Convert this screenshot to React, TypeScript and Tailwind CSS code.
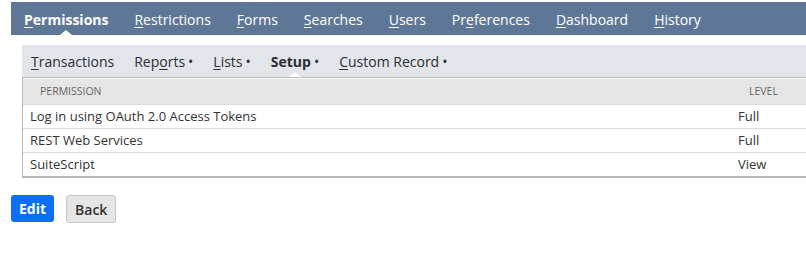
const tabs = [
  { pre: "", u: "P", post: "ermissions", active: true },
  { pre: "", u: "R", post: "estrictions" },
  { pre: "", u: "F", post: "orms" },
  { pre: "", u: "S", post: "earches" },
  { pre: "", u: "U", post: "sers" },
  { pre: "Pr", u: "e", post: "ferences" },
  { pre: "", u: "D", post: "ashboard" },
  { pre: "", u: "H", post: "istory" },
]

const subtabs = [
  { pre: "", u: "T", post: "ransactions", dot: false },
  { pre: "Rep", u: "o", post: "rts", dot: true },
  { pre: "", u: "L", post: "ists", dot: true },
  { pre: "Setup", u: "", post: "", dot: true, active: true },
  { pre: "", u: "C", post: "ustom Record", dot: true },
]

const rows = [
  { name: "Log in using OAuth 2.0 Access Tokens", level: "Full" },
  { name: "REST Web Services", level: "Full" },
  { name: "SuiteScript", level: "View" },
]

export default function App() {
  return (
    <div className="w-[806px] h-[257px] bg-white pt-[2px] text-[#222] font-['Open_Sans',sans-serif]">
      <div className="ml-[11px] h-[33px] bg-[#5f7797] flex items-center pl-[13px] gap-[26px]">
        {tabs.map((t) => (
          <div key={t.u + t.post} className={"relative h-full flex items-center pt-[1px] text-[14px] text-white " + (t.active ? "font-bold" : "")}>
            <span>
              {t.pre}
              <span className="underline underline-offset-2">{t.u}</span>
              {t.post}
            </span>
            {t.active && (
              <span className="absolute bottom-0 left-1/2 -translate-x-1/2 w-0 h-0 border-l-[6px] border-r-[6px] border-b-[5px] border-l-transparent border-r-transparent border-b-white" />
            )}
          </div>
        ))}
      </div>

      <div className="ml-[22px] mt-[10px]">
        <div className="h-[32px] bg-[#e2e5ea] flex items-center pl-[9px] gap-[20px]">
          {subtabs.map((t) => (
            <div key={t.pre + t.post} className={"relative h-full flex items-center text-[14px] text-[#2b2f33] " + (t.active ? "font-bold" : "")}>
              <span>
                {t.pre}
                {t.u && <span className="underline underline-offset-2">{t.u}</span>}
                {t.post}
                {t.dot && <span className="font-normal ml-[3px]">•</span>}
              </span>
              {t.active && (
                <span className="absolute bottom-0 left-[18px] w-0 h-0 border-l-[6px] border-r-[6px] border-b-[5px] border-l-transparent border-r-transparent border-b-white" />
              )}
            </div>
          ))}
        </div>

        <div className="border border-[#b8b8b8] border-r-0 border-b-[2px] bg-white pt-[1px]">
          <div className="h-[25px] bg-[#e5e5e5] flex items-center text-[10.5px] text-[#666] uppercase">
            <div className="flex-1 pl-[17px]">Permission</div>
            <div className="w-[57px]">Level</div>
          </div>
          {rows.map((r) => (
            <div key={r.name} className="h-[24px] flex items-center border-t border-[#dcdcdc] text-[13px] text-[#333]">
              <div className="flex-1 pl-[7px]">{r.name}</div>
              <div className="w-[68px]">{r.level}</div>
            </div>
          ))}
        </div>
      </div>

      <div className="flex gap-[12px] ml-[11px] mt-[17px]">
        <button className="h-[27px] px-[8px] rounded-[3px] bg-[#0b6ff7] text-white text-[14px] font-bold">Edit</button>
        <button className="h-[28px] px-[8px] rounded-[3px] bg-[#e5e5e5] border border-[#c8c8c8] text-[#333] text-[14px] font-semibold">Back</button>
      </div>
    </div>
  )
}
